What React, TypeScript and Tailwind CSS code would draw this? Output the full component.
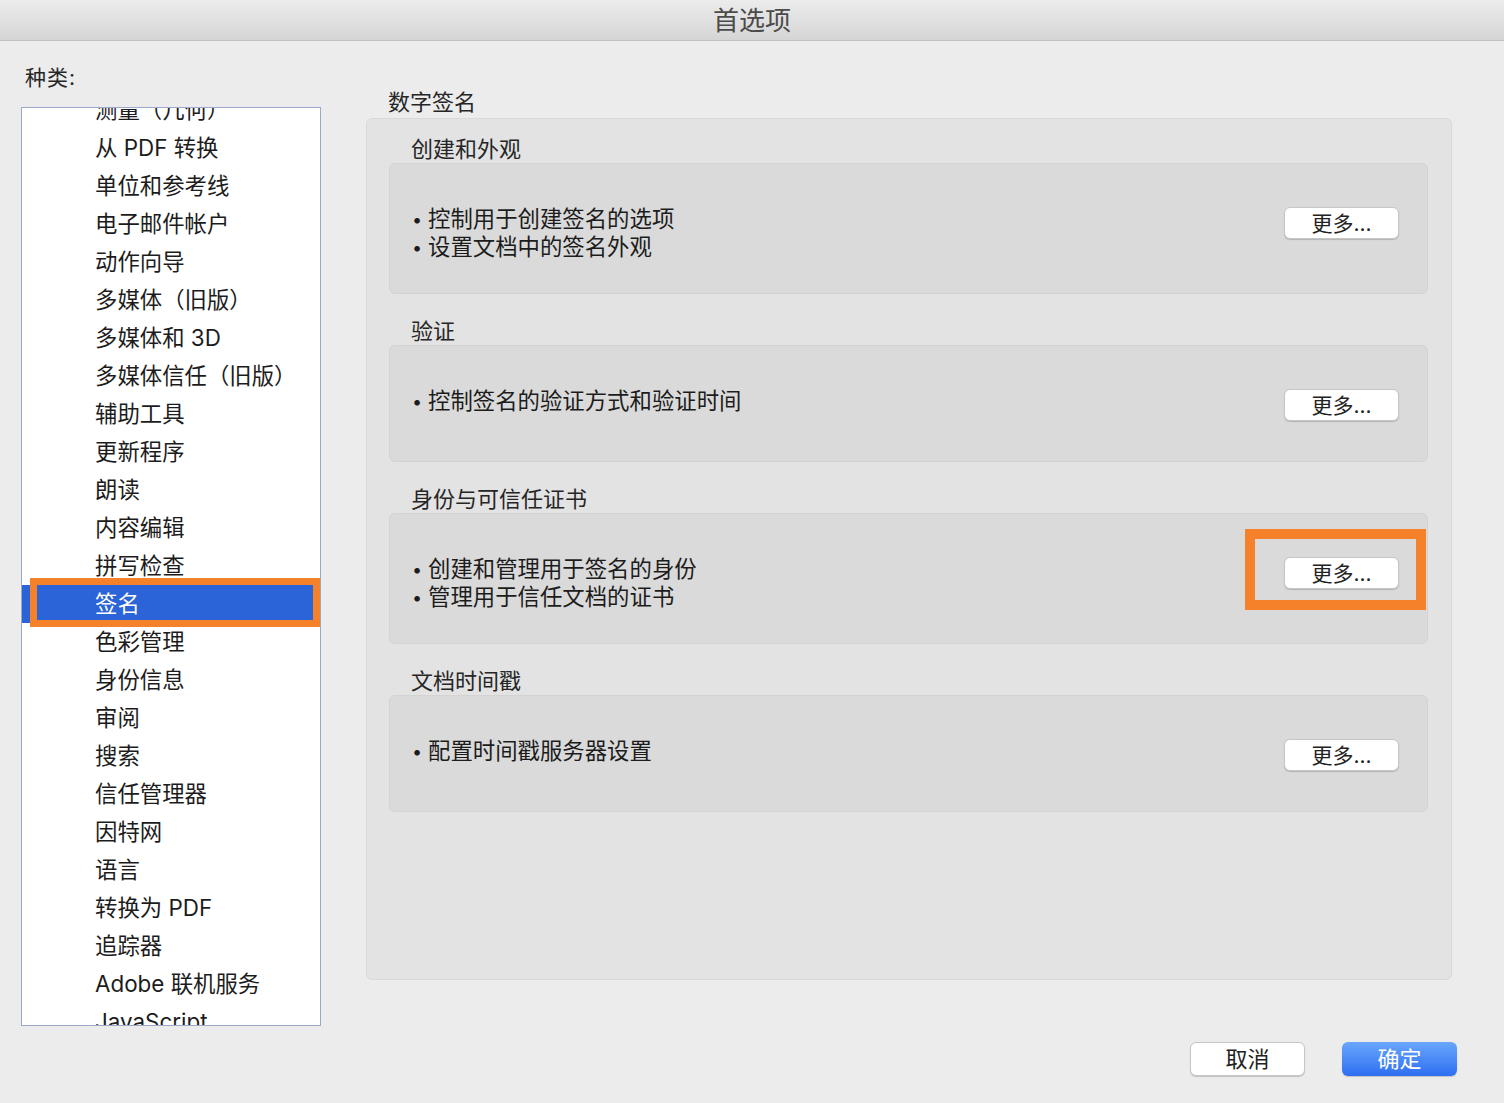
import React from "react";

const categories = [
  "测量（几何）",
  "从 PDF 转换",
  "单位和参考线",
  "电子邮件帐户",
  "动作向导",
  "多媒体（旧版）",
  "多媒体和 3D",
  "多媒体信任（旧版）",
  "辅助工具",
  "更新程序",
  "朗读",
  "内容编辑",
  "拼写检查",
  "签名",
  "色彩管理",
  "身份信息",
  "审阅",
  "搜索",
  "信任管理器",
  "因特网",
  "语言",
  "转换为 PDF",
  "追踪器",
  "Adobe 联机服务",
  "JavaScript",
];

interface Section {
  title: string;
  lines: string[];
  height: string;
  marked?: boolean;
}

const sections: Section[] = [
  { title: "创建和外观", lines: ["控制用于创建签名的选项", "设置文档中的签名外观"], height: "h-[131px]" },
  { title: "验证", lines: ["控制签名的验证方式和验证时间"], height: "h-[117px]" },
  {
    title: "身份与可信任证书",
    lines: ["创建和管理用于签名的身份", "管理用于信任文档的证书"],
    height: "h-[131px]",
    marked: true,
  },
  { title: "文档时间戳", lines: ["配置时间戳服务器设置"], height: "h-[117px]" },
];

const MoreButton = ({ marked }: { marked?: boolean }) => (
  <div className="relative ml-auto mt-[43px]">
    <button className="w-[115px] h-[32px] rounded-[6px] bg-white border border-[#c6c6c6] shadow-[0_1px_1px_rgba(0,0,0,0.18)] text-[21px] leading-none text-[#222] flex items-center justify-center">
      更多...
    </button>
    {marked && (
      <div className="absolute -left-[39px] -top-[28px] -right-[27px] -bottom-[21px] border-[10px] border-[#f5822a]" />
    )}
  </div>
);

const App = () => {
  return (
    <div className="w-[1504px] h-[1103px] overflow-hidden bg-[#ececec] text-[#1c1c1c] font-['Inter','Noto_Sans_CJK_SC',sans-serif]">
      <div className="h-[41px] border-b border-[#c2c2c2] bg-linear-to-b from-[#ececec] to-[#d5d5d5] flex items-center justify-center text-[26px] text-[#4b4b4b]">
        首选项
      </div>

      <div className="flex pl-[21px]">
        {/* categories */}
        <div className="w-[300px]">
          <div className="mt-[23px] pl-[4px] leading-[28px] text-[21px] text-[#262626] tracking-[1px]">种类:</div>
          <div className="mt-[15px] h-[919px] border border-[#9aaacb] bg-white overflow-hidden">
            <div className="-mt-[17px]">
              {categories.map((c) =>
                c === "签名" ? (
                  <div key={c} className="relative z-10 h-[38px] flex items-center pl-[73px] text-[22.4px] bg-[#2b63d9] text-white">
                    {c}
                    <div className="absolute -top-[7px] left-[8px] right-0 -bottom-[4px] border-[7px] border-[#f5822a]" />
                  </div>
                ) : (
                  <div key={c} className="h-[38px] flex items-center pl-[73px] text-[22.4px] whitespace-nowrap">
                    {c}
                  </div>
                )
              )}
            </div>
          </div>
        </div>

        {/* settings */}
        <div className="ml-[45px] w-[1086px]">
          <div className="mt-[47px] pl-[22px] leading-[28px] text-[22px] text-[#262626]">数字签名</div>
          <div className="mt-[2px] h-[862px] rounded-[6px] border border-[#d9d9d9] bg-[#e3e3e3] pt-[16px] pl-[22px] pr-[23px] flex flex-col gap-[23px]">
            {sections.map((s) => (
              <div key={s.title}>
                <div className="pl-[22px] h-[28px] leading-[28px] text-[22px] text-[#262626]">{s.title}</div>
                <div className={`${s.height} rounded-[6px] border border-[#d3d3d3] bg-[#dadada] flex items-start pl-[22px] pr-[28px]`}>
                  <div className="mt-[41px]">
                    {s.lines.map((l) => (
                      <div key={l} className="flex h-[28px] items-center text-[22.4px] text-[#1c1c1c]">
                        <span className="w-[16px] text-[18px]">•</span>
                        <span>{l}</span>
                      </div>
                    ))}
                  </div>
                  <MoreButton marked={s.marked} />
                </div>
              </div>
            ))}
          </div>
        </div>
      </div>

      <div className="mt-[16px] flex justify-end gap-[37px] pr-[47px]">
        <button className="w-[115px] h-[34px] rounded-[6px] bg-white border border-[#c6c6c6] shadow-[0_1px_1px_rgba(0,0,0,0.18)] text-[22px] leading-none text-[#222] flex items-center justify-center">
          取消
        </button>
        <button className="w-[115px] h-[34px] rounded-[6px] bg-linear-to-b from-[#69a6fb] to-[#2e6ef2] shadow-[0_1px_1px_rgba(0,0,0,0.18)] text-[22px] leading-none text-white flex items-center justify-center">
          确定
        </button>
      </div>
    </div>
  );
};

export default App;
